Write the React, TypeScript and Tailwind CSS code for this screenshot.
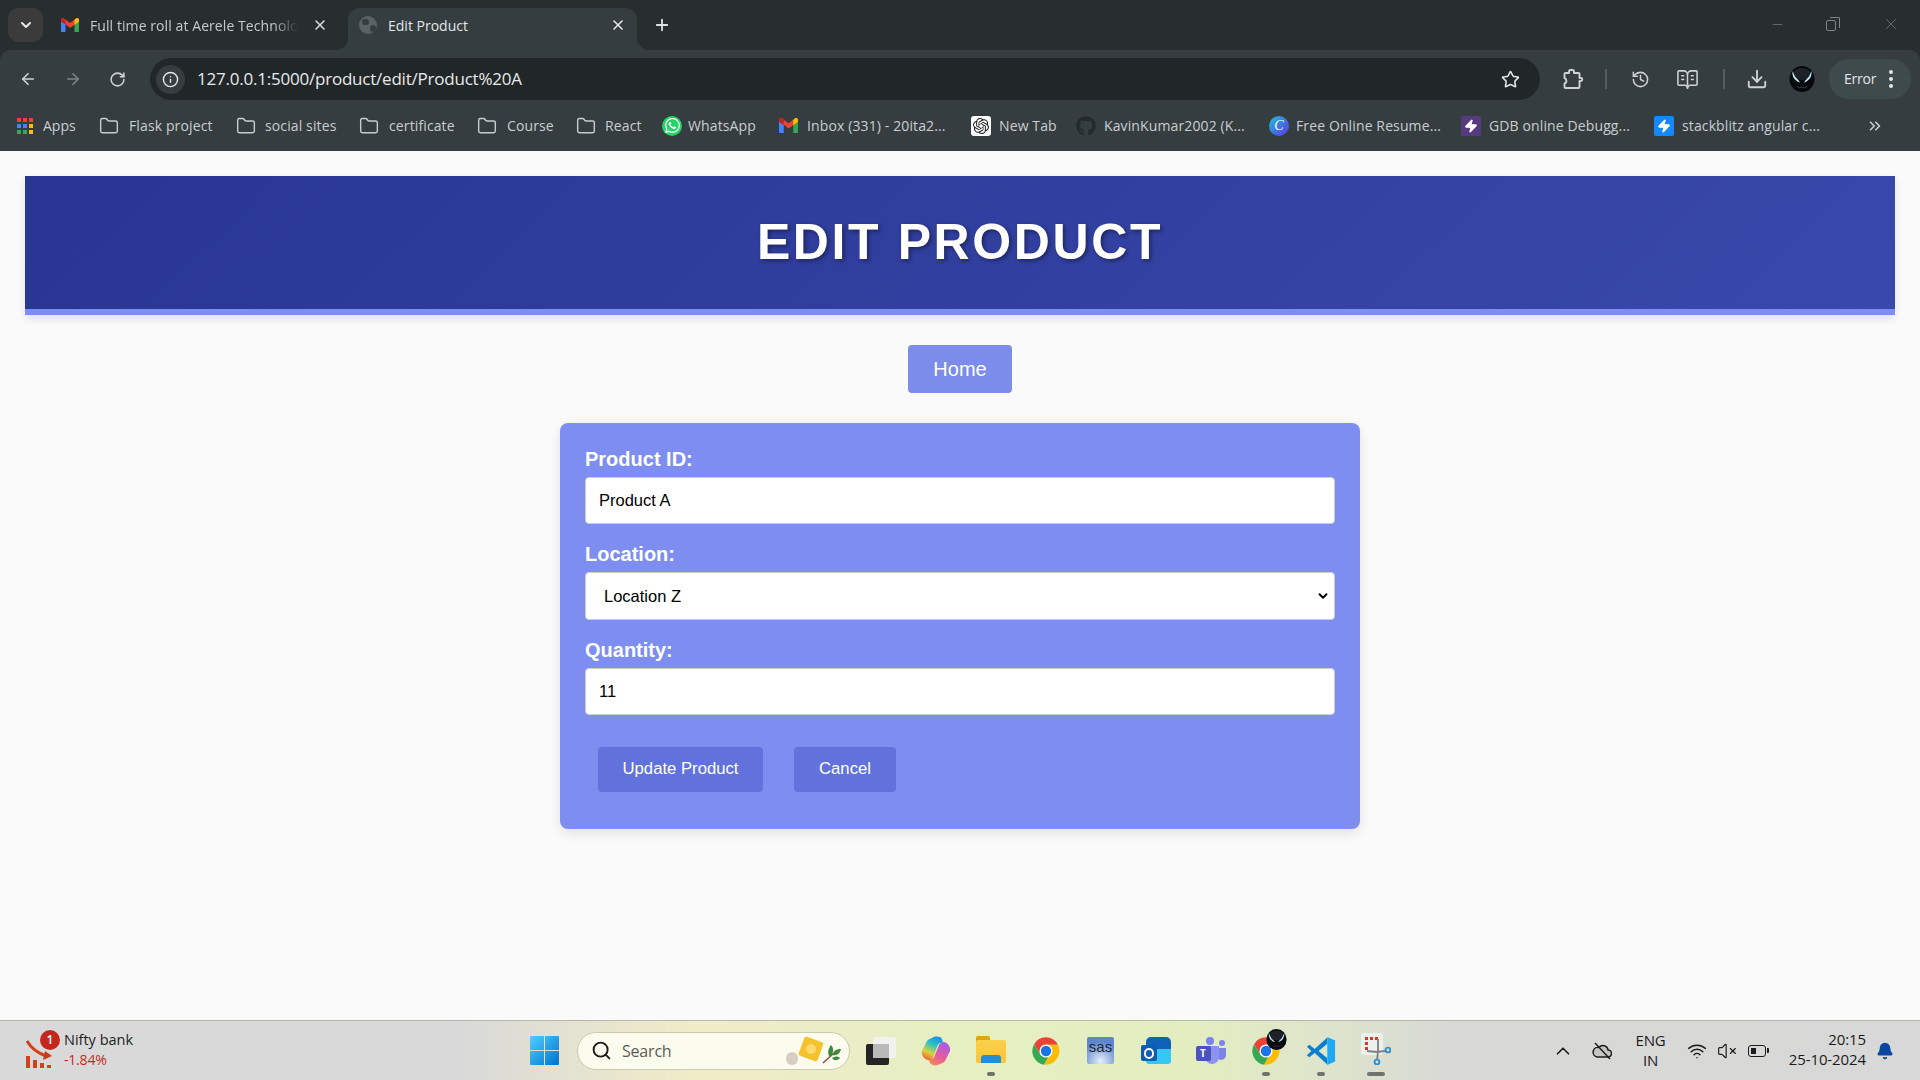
import { ArrowLeft, ArrowRight, RotateCw, Info, Star, History, BookOpenText, Download, X, Plus, ChevronDown, ChevronUp, ChevronsRight, Folder, Minus, Search, Wifi, VolumeX, Bell, Zap } from "lucide-react";
import { FaWhatsapp, FaGithub } from "react-icons/fa";
import { SiOpenai } from "react-icons/si";

const ui = "font-['Open_Sans','Noto_Sans',sans-serif]";

function Gmail({ s = 18 }: { s?: number }) {
  return (
    <svg width={s} height={s * 0.8} viewBox="0 0 20 16">
      <path fill="#4285f4" d="M0 4v10.5A1.5 1.5 0 0 0 1.5 16H5V7z" />
      <path fill="#34a853" d="M15 7v9h3.5a1.5 1.5 0 0 0 1.5-1.5V4z" />
      <path fill="#ea4335" d="M5 7 0 4V2C0 .3 2 -.6 3.300 .5L10 5.500 16.700 .5C18-.6 20 .3 20 2v2l-5 3.700L10 11z" />
      <path fill="#fbbc04" d="M15 2.300 16.700 .5C18-.6 20 .3 20 2v2l-5 3.700z" />
      <path fill="#c5221f" d="M0 2c0-1.700 2-2.600 3.300-1.500L5 2v5L0 4z" />
    </svg>
  );
}

function Chrome({ s = 30 }: { s?: number }) {
  return (
    <svg width={s} height={s} viewBox="0 0 48 48">
      <path fill="#ea4335" d="M24 2A22 22 0 0 0 5 13l9.500 16.500L24 14h19A22 22 0 0 0 24 2z" />
      <path fill="#34a853" d="M5 13a22 22 0 0 0 16 32.800l9.500-16.500-16 .2z" />
      <path fill="#fbbc04" d="M43 14H24l6.500 15.300L21 45.800A22 22 0 0 0 43 14z" />
      <circle cx="24" cy="24" r="10.500" fill="#fff" />
      <circle cx="24" cy="24" r="8.300" fill="#1a73e8" />
    </svg>
  );
}

function Venom({ s }: { s: number }) {
  return (
    <svg width={s} height={s} viewBox="0 0 26 26">
      <ellipse cx="13" cy="13" rx="12.500" ry="13" fill="#07090c" />
      <ellipse cx="13" cy="8" rx="9" ry="6" fill="#1c2227" />
      <path d="M3.500 5C3 10 5 14.500 11 16.500 9.500 13.500 6.500 12 5.500 9.500z" fill="#bfeefb" />
      <path d="M22.500 5C23 10 21 14.500 15 16.500 16.500 13.500 19.500 12 20.500 9.500z" fill="#bfeefb" />
      <path d="M8 20l2 2 3-1 3 1 2-2" stroke="#333a40" strokeWidth="1" fill="none" />
    </svg>
  );
}

function PuzzleIcon() {
  return (
    <svg width="22" height="22" viewBox="0 0 22 22" fill="none" stroke="#cfd3d5" strokeWidth="1.900" strokeLinejoin="round">
      <path d="M3.500 5H7V3.500a1.500 1.500 0 0 1 1.500-1.500h2A1.500 1.500 0 0 1 12 3.500V5h4.500a1 1 0 0 1 1 1v4h1.300a1.500 1.500 0 0 1 0 3h-1.300v6a1 1 0 0 1-1 1h-13a1 1 0 0 1-1-1v-3.500c2.500-.5 2.500-4.500 0-5.500V6a1 1 0 0 1 1-1z" />
    </svg>
  );
}

function AppsGrid() {
  const c = ["bg-[#ea4335]", "bg-[#ea4335]", "bg-[#ea4335]", "bg-[#4285f4]", "bg-[#4285f4]", "bg-[#fbbc04]", "bg-[#34a853]", "bg-[#34a853]", "bg-[#fbbc04]"];
  return (
    <div className="grid grid-cols-3 gap-[2px] w-[16px]">
      {c.map((k, i) => (
        <div key={i} className={`h-[4px] w-[4px] ${k}`} />
      ))}
    </div>
  );
}

function FolderIcon() {
  return <Folder size={20} strokeWidth={1.7} className="text-[#c7cccf]" />;
}

function Bolt({ bg }: { bg: string }) {
  return (
    <div className={`h-[20px] w-[20px] rounded-[2px] flex items-center justify-center ${bg}`}>
      <Zap size={14} fill="#fff" stroke="#fff" />
    </div>
  );
}

function BM({ w, iw = "w-[28px]", icon, text }: { w: string; iw?: string; icon: React.ReactNode; text: string }) {
  return (
    <div className={`flex items-center h-full shrink-0 ${w}`}>
      <div className={`shrink-0 flex items-center ${iw}`}>{icon}</div>
      <span className="text-[14px] tracking-[0.12px] text-[#c9cdd0] whitespace-nowrap">{text}</span>
    </div>
  );
}

function Tabs() {
  return (
    <div className="h-[50px] bg-[#282d30] flex items-end shrink-0 relative">
      <div className="ml-[8px] mb-[8px] h-[34px] w-[35px] rounded-[10px] bg-[#3b3b3b] flex items-center justify-center">
        <ChevronDown size={16} strokeWidth={3} className="text-[#e6e8e9]" />
      </div>
      <div className="ml-[18px] w-[287px] h-[42px] flex items-center pb-[8px]">
        <Gmail />
        <span className="ml-[11px] w-[208px] whitespace-nowrap text-[14px] tracking-[0.08px] text-[#c6cacc] [mask-image:linear-gradient(90deg,#000_88%,transparent)]">Full time roll at Aerele Technolo</span>
        <X size={16} strokeWidth={2.4} className="ml-[14px] text-[#d5d8da]" />
      </div>
      <div className="w-[289px] h-[42px] rounded-t-[12px] bg-[#363d40] flex items-center pl-[11px] pb-[8px] relative">
        <div className="w-[18px] h-[18px] rounded-full bg-[#5b6265] relative overflow-hidden">
          <div className="absolute left-[3px] top-[3px] w-[7px] h-[6px] rounded-full bg-[#363d40]" />
          <div className="absolute right-[1px] bottom-[2px] w-[6px] h-[7px] rounded-full bg-[#363d40]" />
        </div>
        <span className="ml-[11px] text-[14px] tracking-[0px] text-[#e3e5e6] w-[222px]">Edit Product</span>
        <X size={16} strokeWidth={2.4} className="text-[#e3e5e6]" />
        <div className="absolute left-[-12px] bottom-0 w-[12px] h-[12px] bg-[#363d40]">
          <div className="w-full h-full rounded-br-[12px] bg-[#282d30]" />
        </div>
        <div className="absolute right-[-12px] bottom-0 w-[12px] h-[12px] bg-[#363d40]">
          <div className="w-full h-full rounded-bl-[12px] bg-[#282d30]" />
        </div>
      </div>
      <Plus size={18} strokeWidth={2.4} className="ml-[16px] mb-[16px] text-[#dfe2e3]" />
      <div className="ml-auto h-full flex items-center pb-[2px] text-[#7f8588]">
        <Minus size={15} strokeWidth={1} />
        <div className="ml-[41px] relative w-[14px] h-[14px]">
          <div className="absolute left-0 bottom-0 w-[10px] h-[11px] border border-[#7f8588] rounded-[2px]" />
          <div className="absolute right-0 top-0 w-[10px] h-[11px] border-t border-r border-[#7f8588] rounded-tr-[2px]" />
        </div>
        <X size={18} strokeWidth={1} className="ml-[42px] mr-[20px]" />
      </div>
    </div>
  );
}

function Toolbar() {
  return (
    <div className="h-[50px] bg-[#363d40] rounded-t-[10px] flex items-end shrink-0 text-[#cfd3d5] relative">
      <div className="h-full flex items-center pt-[8px] pl-[19px] w-[150px]">
        <ArrowLeft size={18} strokeWidth={2.2} />
        <ArrowRight size={18} strokeWidth={2.2} className="ml-[27px] text-[#7f8588]" />
        <RotateCw size={17} strokeWidth={2.2} className="ml-[27px]" />
      </div>
      <div className="h-[42px] w-[1390px] rounded-full bg-[#212729] flex items-center pl-[6px]">
        <div className="w-[29px] h-[29px] rounded-full bg-[#363d40] flex items-center justify-center">
          <Info size={17} strokeWidth={2} className="text-[#e4e6e7]" />
        </div>
        <span className="ml-[12px] text-[17px] tracking-[-0.22px] text-[#e8e9ea]">127.0.0.1:5000/product/edit/Product%20A</span>
        <Star size={19} strokeWidth={2} className="ml-auto mr-[20px] text-[#e4e6e7]" />
      </div>
      <div className="h-[42px] flex items-center">
        <div className="ml-[22px]"><PuzzleIcon /></div>
        <div className="ml-[21px] w-[2px] h-[20px] bg-[#565c5f]" />
        <History size={19} strokeWidth={1.9} className="ml-[24px]" />
        <BookOpenText size={23} strokeWidth={1.6} className="ml-[26px]" />
        <div className="ml-[24px] w-[2px] h-[20px] bg-[#565c5f]" />
        <Download size={22} strokeWidth={2} className="ml-[21px]" />
        <div className="ml-[21px]"><Venom s={26} /></div>
        <div className="ml-[14px] w-[82px] h-[40px] rounded-full bg-[#3f4a4c] flex items-center pl-[15px] pb-[1px]">
          <span className="text-[14px] tracking-[-0.2px] text-[#e3e5e6]">Error</span>
          <div className="ml-[13px] flex flex-col gap-[3px]">
            <div className="w-[4px] h-[4px] rounded-full bg-[#e3e5e6]" />
            <div className="w-[4px] h-[4px] rounded-full bg-[#e3e5e6]" />
            <div className="w-[4px] h-[4px] rounded-full bg-[#e3e5e6]" />
          </div>
        </div>
      </div>
    </div>
  );
}

function Bookmarks() {
  return (
    <div className="h-[51px] bg-[#363d40] flex items-center pl-[17px] shrink-0 relative">
      <div className="flex items-center h-full shrink-0 w-[82px]">
        <div className="w-[26px] shrink-0"><AppsGrid /></div>
        <span className="text-[14px] tracking-[0px] text-[#c9cdd0]">Apps</span>
      </div>
      <BM w="w-[137px]" iw="w-[30px]" icon={<FolderIcon />} text="Flask project" />
      <BM w="w-[123px]" iw="w-[29px]" icon={<FolderIcon />} text="social sites" />
      <BM w="w-[118px]" iw="w-[30px]" icon={<FolderIcon />} text="certificate" />
      <BM w="w-[99px]" iw="w-[30px]" icon={<FolderIcon />} text="Course" />
      <BM w="w-[86px]" iw="w-[29px]" icon={<FolderIcon />} text="React" />
      <BM w="w-[117px]" iw="w-[26px]" icon={<div className="w-[20px] h-[20px] rounded-full bg-[#25d366] flex items-center justify-center"><FaWhatsapp size={17} color="#fff" /></div>} text="WhatsApp" />
      <BM w="w-[192px]" icon={<Gmail s={19} />} text="Inbox (331) - 20ita2..." />
      <BM w="w-[105px]" icon={<div className="w-[20px] h-[20px] rounded-[3px] bg-white flex items-center justify-center"><SiOpenai size={16} color="#222" /></div>} text="New Tab" />
      <BM w="w-[193px]" icon={<FaGithub size={20} color="#24292b" />} text="KavinKumar2002 (K..." />
      <BM w="w-[192px]" iw="w-[27px]" icon={<div className="w-[20px] h-[20px] rounded-full bg-[linear-gradient(135deg,#1fc4d4,#5a32e8)] flex items-center justify-center text-[14px] italic text-white font-['Liberation_Serif',serif]">C</div>} text="Free Online Resume..." />
      <BM w="w-[193px]" icon={<Bolt bg="bg-[#553a7d]" />} text="GDB online Debugg..." />
      <BM w="w-[212px]" icon={<Bolt bg="bg-[#1389fd]" />} text="stackblitz angular c..." />
      <ChevronsRight size={18} strokeWidth={2.2} className="text-[#c9cdd0]" />
    </div>
  );
}

function Label({ children }: { children: React.ReactNode }) {
  return <label className="block h-[23px] leading-[24px] text-[20px] font-bold text-white mb-[7px]">{children}</label>;
}

function Page() {
  return (
    <div className="flex-1 min-h-0 bg-[#fafafa] pt-[25px] px-[25px] font-['Liberation_Sans',Arial,sans-serif]">
      <div className="h-[139px] border-b-[6px] border-[#7c8ef0] bg-[linear-gradient(135deg,#283593,#3949ab)] shadow-[0_4px_8px_rgba(0,0,0,0.1)] flex items-center justify-center">
        <h1 className="text-[50px] font-bold text-white tracking-[2.6px] [text-shadow:2px_2px_4px_rgba(0,0,0,0.4)]">EDIT PRODUCT</h1>
      </div>
      <div className="flex justify-center mt-[30px]">
        <a className="h-[48px] w-[104px] rounded-[4px] bg-[#7c8cea] text-white text-[20px] flex items-center justify-center">Home</a>
      </div>
      <form className="mt-[30px] mx-auto w-[800px] h-[406px] rounded-[8px] bg-[#7d8ef0] shadow-[0_4px_12px_rgba(0,0,0,0.1)] px-[25px] pt-[24px]">
        <Label>Product ID:</Label>
        <input readOnly value="Product A" className="block w-full h-[47px] rounded-[4px] border border-[#ccc] bg-white pl-[13px] text-[16.5px] text-black mb-[18px]" />
        <Label>Location:</Label>
        <div className="relative mb-[18px]">
          <select defaultValue="Location Z" className="block w-full h-[48px] appearance-none rounded-[4px] border border-[#ccc] bg-white pl-[18px] text-[16.5px] text-black">
            <option>Location Z</option>
          </select>
          <ChevronDown size={14} strokeWidth={3.2} className="absolute right-[5px] top-[17px] text-black pointer-events-none" />
        </div>
        <Label>Quantity:</Label>
        <input readOnly value="11" className="block w-full h-[47px] rounded-[4px] border border-[#ccc] bg-white pl-[13px] text-[16.5px] text-black" />
        <div className="flex mt-[32px] ml-[13px] gap-[31px]">
          <button type="button" className="w-[165px] h-[45px] pb-[2px] rounded-[4px] bg-[#6272dd] text-white text-[16.7px]">Update Product</button>
          <button type="button" className="w-[102px] h-[45px] pb-[2px] rounded-[4px] bg-[#6272dd] text-white text-[16.7px]">Cancel</button>
        </div>
      </form>
    </div>
  );
}

function TaskIcon({ w, children, mark }: { w: string; children: React.ReactNode; mark?: string }) {
  return (
    <div className={`relative flex items-center justify-center h-full shrink-0 ${w}`}>
      {children}
      {mark && <div className={`absolute bottom-[4px] left-1/2 -translate-x-1/2 h-[4px] rounded-full bg-[#6f7370] ${mark}`} />}
    </div>
  );
}

function Taskbar() {
  return (
    <div className={`h-[60px] shrink-0 border-t border-[#b6b8ae] flex items-center bg-[linear-gradient(90deg,#d9d9d9_0%,#d9d9d9_24%,#f0ecc8_36%,#e6efc2_50%,#e3eec0_62%,#dde3cd_70%,#d8d8d6_76%,#d8d8d8_100%)] ${ui}`}>
      <div className="w-[530px] flex items-center pl-[26px] h-full shrink-0">
        <div className="relative w-[30px] h-[36px] mt-[-2px]">
          <svg width="30" height="36" viewBox="0 0 30 36" className="absolute left-0 top-0">
            <path d="M1 9c4 7 11 12 19 15" stroke="#d4401a" strokeWidth="3" fill="none" />
            <path d="M26 24l-9 4 2-9z" fill="#c93a17" />
            <rect x="0" y="24" width="4" height="12" fill="#d4401a" />
            <rect x="7" y="28" width="4" height="8" fill="#d4401a" />
            <rect x="14" y="31" width="4" height="5" fill="#d4401a" />
            <rect x="21" y="33" width="4" height="3" fill="#d4401a" />
          </svg>
          <div className="absolute left-[14px] top-[-2px] w-[20px] h-[20px] rounded-full bg-[#c4281c] text-white text-[12px] font-semibold flex items-center justify-center">1</div>
        </div>
        <div className="ml-[8px] flex flex-col mt-[-2px]">
          <span className="text-[14.5px] leading-[20px] tracking-[0px] text-[#1f1f1f]">Nifty bank</span>
          <span className="text-[14px] leading-[19px] tracking-[-0.2px] text-[#c42b1c]">-1.84%</span>
        </div>
      </div>
      <svg width="29" height="29" viewBox="0 0 29 29" className="shrink-0">
        <defs>
          <linearGradient id="w" x1="0" y1="0" x2="1" y2="1">
            <stop offset="0" stopColor="#4fd0ff" />
            <stop offset="1" stopColor="#0072cf" />
          </linearGradient>
        </defs>
        <path fill="url(#w)" d="M1 0h13v14H0V1a1 1 0 0 1 1-1zM15 0h13a1 1 0 0 1 1 1v13H15zM0 15h14v14H1a1 1 0 0 1-1-1zM15 15h14v13a1 1 0 0 1-1 1H15z" />
      </svg>
      <div className="ml-[18px] w-[273px] h-[38px] rounded-full bg-[#fbfbee] border border-[#c9cbb2] flex items-center pl-[13px] shrink-0">
        <Search size={21} strokeWidth={2.2} className="text-[#1c1c1c]" />
        <span className="ml-[10px] text-[16px] tracking-[-0.2px] text-[#5c5c58]">Search</span>
        <div className="ml-auto mr-[7px] flex items-center relative w-[56px] h-[30px]">
          <div className="absolute left-0 top-[16px] w-[12px] h-[13px] rounded-full bg-[#d8cfc4]" />
          <div className="absolute left-[15px] top-[3px] w-[20px] h-[20px] rotate-[20deg] rounded-[2px] bg-[#f5c22c] flex items-center justify-center">
            <div className="w-[10px] h-[10px] rounded-full bg-[#f9db6e]" />
          </div>
          <svg width="20" height="20" viewBox="0 0 20 20" className="absolute right-0 top-[8px]">
            <path d="M1 19 12 9" stroke="#8a4a4a" strokeWidth="1.500" />
            <path d="M8 13C5 10 6 5 9 1c3 3 3 8-1 12zM11 11c0-4 3-6 8-6-1 4-4 7-8 6zM10 14c3-2 6-2 8 0-3 3-6 3-8 0z" fill="#3c8a3a" />
          </svg>
        </div>
      </div>
      <div className="ml-[3px] flex h-full items-center shrink-0">
        <TaskIcon w="w-[55px]">
          <div className="relative w-[30px] h-[28px]">
            <div className="absolute left-0 bottom-0 w-[23px] h-[21px] rounded-[2px] bg-[#242424]" />
            <div className="absolute right-0 top-0 w-[23px] h-[21px] rounded-[2px] bg-[#f2f2f0]" />
            <div className="absolute left-[7px] top-[7px] w-[16px] h-[14px] bg-[#b9b9b9]" />
          </div>
        </TaskIcon>
        <TaskIcon w="w-[55px]">
          <svg width="30" height="30" viewBox="0 0 30 30">
            <defs>
              <linearGradient id="c1" x1="0.7" y1="0" x2="0.3" y2="1">
                <stop offset="0" stopColor="#1f8fe8" />
                <stop offset="0.35" stopColor="#2ec4c0" />
                <stop offset="0.7" stopColor="#d9d23c" />
                <stop offset="1" stopColor="#f0603a" />
              </linearGradient>
              <linearGradient id="c2" x1="0.7" y1="0" x2="0.3" y2="1">
                <stop offset="0" stopColor="#a45ae8" />
                <stop offset="0.6" stopColor="#e85aa0" />
                <stop offset="1" stopColor="#f4845a" />
              </linearGradient>
            </defs>
            <path fill="url(#c2)" d="M19 28C16 30 11 30 9 27L8 24C11 25 13 22 14 19L18 9C19 7 21 6 23 6C27 7 30 11 29 15L25 23C24 26 22 27 19 28z" />
            <path fill="url(#c1)" d="M11 2C14 0 19 0 21 3L22 7C19 6 17 8 16 11L12 22C11 24 9 25 7 24C3 23 0 19 1 15L5 7C6 4 8 3 11 2z" />
          </svg>
        </TaskIcon>
        <TaskIcon w="w-[55px]" mark="w-[8px]">
          <div className="relative w-[30px] h-[27px] mt-[-3px]">
            <div className="absolute left-0 top-0 w-[14px] h-[8px] rounded-t-[2px] bg-[#e0a418]" />
            <div className="absolute left-0 top-[4px] w-[30px] h-[23px] rounded-[2px] bg-[linear-gradient(180deg,#fbd04a,#fcc437)]" />
            <div className="absolute left-[5px] bottom-0 w-[20px] h-[8px] rounded-t-[3px] bg-[#1f8fd8]" />
          </div>
        </TaskIcon>
        <TaskIcon w="w-[55px]"><Chrome /></TaskIcon>
        <TaskIcon w="w-[55px]">
          <div className="w-[27px] h-[27px] rounded-[2px] bg-[radial-gradient(circle_at_50%_90%,#e6effa,#5d86cf_70%)] flex justify-center text-[15px] leading-[20px] font-['Liberation_Sans',sans-serif] text-[#20262e]">sas</div>
        </TaskIcon>
        <TaskIcon w="w-[55px]">
          <div className="relative w-[30px] h-[27px]">
            <div className="absolute right-0 bottom-0 w-[25px] h-[18px] rounded-b-[3px] bg-[#38c6f4]" />
            <div className="absolute right-0 top-0 w-[25px] h-[12px] rounded-t-[5px] bg-[#0f62b8]" />
            <div className="absolute left-0 bottom-[3px] w-[16px] h-[16px] rounded-[2px] bg-[#0a5cb8] flex items-center justify-center">
              <div className="w-[10px] h-[11px] rounded-full border-2 border-white" />
            </div>
          </div>
        </TaskIcon>
        <TaskIcon w="w-[55px]">
          <div className="relative w-[30px] h-[27px]">
            <div className="absolute right-[1px] top-[3px] w-[6px] h-[6px] rounded-full bg-[#7b83eb]" />
            <div className="absolute left-[10px] top-0 w-[8px] h-[8px] rounded-full bg-[#7b83eb]" />
            <div className="absolute right-0 top-[11px] w-[10px] h-[12px] rounded-b-[5px] bg-[#7b83eb]" />
            <div className="absolute left-[9px] top-[9px] w-[14px] h-[18px] rounded-b-[7px] bg-[#8c92ee]" />
            <div className="absolute left-0 top-[9px] w-[15px] h-[15px] rounded-[2px] bg-[#4b53bc] flex items-center justify-center text-[10px] font-bold text-white">T</div>
          </div>
        </TaskIcon>
        <TaskIcon w="w-[55px]" mark="w-[8px]">
          <Chrome />
          <div className="absolute left-[28px] top-[8px]"><Venom s={21} /></div>
        </TaskIcon>
        <TaskIcon w="w-[55px]" mark="w-[8px]">
          <svg width="30" height="30" viewBox="0 0 100 100">
            <path fill="#0d7fd1" d="M3 36l8-7 18 14L71 5v21L42 50l29 24v21L29 57 11 71l-8-7 15-14z" />
            <path fill="#1fa8f4" d="M71 3l26 12v70L71 97z" />
          </svg>
        </TaskIcon>
        <TaskIcon w="w-[55px]" mark="w-[18px]">
          <svg width="30" height="32" viewBox="0 0 30 32" className="mt-[-3px]">
            <rect x="0" y="0" width="22" height="22" rx="3" fill="#eef0ee" />
            <path d="M4 4h3v3H4zM9 4h3v3H9zM14 4h3v3h-3zM4 9h3v3H4zM4 14h3v3H4z" fill="#d93a1c" />
            <path d="M17 6v13l-1 8M6 18l10 1 8-1" stroke="#7c8084" strokeWidth="1.800" fill="none" />
            <circle cx="27" cy="17" r="2.400" fill="none" stroke="#2b8fd4" strokeWidth="1.900" />
            <circle cx="16" cy="29" r="2.400" fill="none" stroke="#2b8fd4" strokeWidth="1.900" />
          </svg>
        </TaskIcon>
      </div>
      <div className="ml-auto flex items-center h-full text-[#1c1c1c] shrink-0">
        <ChevronUp size={22} strokeWidth={1.8} className="mr-[-2px]" />
        <svg width="20" height="18" viewBox="0 0 20 18" className="ml-[20px]">
          <path d="M5 15h11a3.500 3.500 0 0 0 0-7 5 5 0 0 0-9-2.500A4.500 4.500 0 0 0 5 15z" fill="#c6c6c6" stroke="#1c1c1c" strokeWidth="1.500" />
          <path d="M3 1l15 16" stroke="#1c1c1c" strokeWidth="1.500" />
        </svg>
        <div className="ml-[24px] w-[29px] flex flex-col items-center text-[15px] leading-[20px] tracking-[-0.2px] mt-[-1px]">
          <span>ENG</span>
          <span>IN</span>
        </div>
        <Wifi size={20} strokeWidth={1.8} className="ml-[22px]" />
        <VolumeX size={20} strokeWidth={1.4} className="ml-[10px]" />
        <div className="ml-[11px] relative w-[18px] h-[12px] rounded-[3px] border-[1.5px] border-[#1c1c1c] flex items-center pl-[2px]">
          <div className="w-[5px] h-[6px] bg-[#1c1c1c]" />
          <div className="absolute right-[-4px] w-[2px] h-[5px] bg-[#1c1c1c] rounded-r-[1px]" />
        </div>
        <div className="ml-[20px] w-[80px] flex flex-col items-end text-[15px] leading-[20px] tracking-[-0.1px] mt-[-3px]">
          <span>20:15</span>
          <span>25-10-2024</span>
        </div>
        <Bell size={18} fill="#0b46a0" stroke="#0b46a0" className="ml-[10px] mr-[26px]" />
      </div>
    </div>
  );
}

export default function App() {
  return (
    <div className="w-[1920px] h-[1080px] flex flex-col overflow-hidden bg-[#282d30]">
      <div className={ui}>
        <Tabs />
        <Toolbar />
        <Bookmarks />
      </div>
      <Page />
      <Taskbar />
    </div>
  );
}
